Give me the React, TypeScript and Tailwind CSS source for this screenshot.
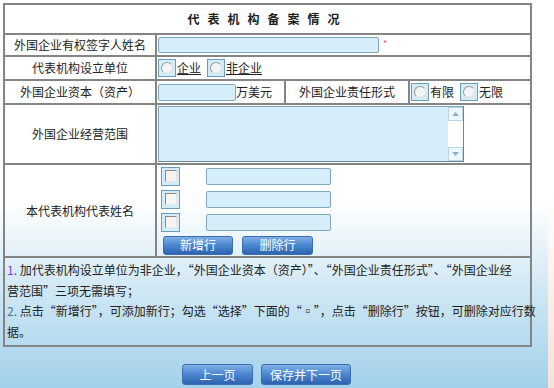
import React from "react";

const font = { fontFamily: '"Noto Sans CJK SC", "Noto Sans", sans-serif' };

function Radio({ label, underline }: { label: string; underline?: boolean }) {
  return (
    <span className="inline-flex items-center">
      <span className="w-[18px] h-[18px] border border-[#6f9bb8] bg-[#d3ecf9] flex items-center justify-center">
        <span className="w-[12px] h-[12px] rounded-full bg-[#f4f4f4] border border-t-[#9a9a9a] border-l-[#9a9a9a] border-r-[#e0e0e0] border-b-[#e0e0e0]" />
      </span>
      <span className={underline ? "ml-[1px] underline underline-offset-1" : "ml-[1px]"}>{label}</span>
    </span>
  );
}

function Check() {
  return (
    <span className="w-[19px] h-[19px] border border-[#6f9bb8] bg-[#d3ecf9] flex items-center justify-center">
      <span className="w-[12px] h-[12px] bg-[#f6f4ee] border border-t-[#8a8a8a] border-l-[#8a8a8a] border-r-[#e6e6e6] border-b-[#e6e6e6]" />
    </span>
  );
}

function BlueButton({ children, w }: { children: React.ReactNode; w: string }) {
  return (
    <button
      className={`${w} h-[19px] rounded-[3px] border border-[#3b6db0] bg-gradient-to-b from-[#7fb0e6] via-[#4a86cf] to-[#2d62b0] text-white text-[12px] leading-none flex items-center justify-center`}
    >
      {children}
    </button>
  );
}

const cell = "border-2 border-[#858585]";

export default function App() {
  return (
    <div className="flex w-[554px] h-[388px] bg-white text-[#222] text-[12px]" style={font}>
      <div className="w-[548px] h-full bg-[linear-gradient(to_bottom,#ffffff_0%,#ffffff_52%,#cfe7f4_75%,#a2d1eb_100%)] pt-[3px] pl-[3px]">
        <table className="border-collapse table-fixed w-[527px]">
          <colgroup>
            <col className="w-[152px]" />
            <col className="w-[129px]" />
            <col className="w-[124px]" />
            <col className="w-[122px]" />
          </colgroup>
          <tbody>
            <tr className="h-[30px]">
              <td colSpan={4} className={`${cell} text-center font-bold tracking-[8px] bg-white`}>
                代表机构备案情况
              </td>
            </tr>
            <tr className="h-[22px]">
              <td className={`${cell} text-center bg-white`}>外国企业有权签字人姓名</td>
              <td colSpan={3} className={`${cell} bg-white pl-[1px]`}>
                <div className="flex items-center">
                  <div className="w-[221px] h-[16px] bg-[#d5eefa] border border-[#7fa7bf] rounded-[2px]" />
                  <span className="ml-[4px] text-[#f04a7a] text-[9px] -mt-[2px]">*</span>
                </div>
              </td>
            </tr>
            <tr className="h-[24px]">
              <td className={`${cell} text-center bg-white`}>代表机构设立单位</td>
              <td colSpan={3} className={`${cell} bg-white pl-[1px]`}>
                <div className="flex items-center gap-[6px]">
                  <Radio label="企业" underline />
                  <Radio label="非企业" underline />
                </div>
              </td>
            </tr>
            <tr className="h-[24px]">
              <td className={`${cell} text-center bg-white`}>外国企业资本（资产）</td>
              <td className={`${cell} bg-white pl-[1px]`}>
                <div className="flex items-center">
                  <div className="w-[78px] h-[17px] bg-[#d5eefa] border border-[#7fa7bf] rounded-[2px]" />
                  <span>万美元</span>
                </div>
              </td>
              <td className={`${cell} text-center bg-white`}>外国企业责任形式</td>
              <td className={`${cell} bg-white pl-[1px]`}>
                <div className="flex items-center gap-[6px]">
                  <Radio label="有限" />
                  <Radio label="无限" />
                </div>
              </td>
            </tr>
            <tr className="h-[60px]">
              <td className={`${cell} text-center bg-white`}>外国企业经营范围</td>
              <td colSpan={3} className={`${cell} bg-white pl-[1px]`}>
                <div className="w-[306px] h-[56px] flex bg-[#d5eefa] border border-[#7f9fb4] border-r-[#6b8597] border-b-[#6b8597]">
                  <div className="flex-1" />
                  <div className="w-[15px] bg-white flex flex-col justify-between">
                    <div className="h-[14px] border border-[#b9d6e8] bg-[#eef7fc] flex items-center justify-center">
                      <svg width="7" height="4" viewBox="0 0 7 4"><path d="M0 4 L3.5 0 L7 4 Z" fill="#8fb0c8" /></svg>
                    </div>
                    <div className="h-[14px] border border-[#b9d6e8] bg-[#eef7fc] flex items-center justify-center">
                      <svg width="7" height="4" viewBox="0 0 7 4"><path d="M0 0 L3.5 4 L7 0 Z" fill="#8fb0c8" /></svg>
                    </div>
                  </div>
                </div>
              </td>
            </tr>
            <tr className="h-[93px]">
              <td className={`${cell} text-center`}>本代表机构代表姓名</td>
              <td colSpan={3} className={`${cell} pl-[4px]`}>
                <div className="flex flex-col gap-[4px]">
                  {[0, 1, 2].map((i) => (
                    <div key={i} className="flex items-center gap-[26px]">
                      <Check />
                      <div className="w-[125px] h-[17px] bg-[#d5eefa] border border-[#7fa7bf] rounded-[2px]" />
                    </div>
                  ))}
                  <div className="flex gap-[9px] pl-[2px]">
                    <BlueButton w="w-[70px]">新增行</BlueButton>
                    <BlueButton w="w-[71px]">删除行</BlueButton>
                  </div>
                </div>
              </td>
            </tr>
            <tr className="h-[86px]">
              <td colSpan={4} className={`${cell} pl-[2px] pr-0 pt-[2px] pb-[3px] align-top leading-[20.5px] whitespace-nowrap`}>
                <p>
                  <span className="text-[#7a3fd0]">1. </span>加代表机构设立单位为非企业，“外国企业资本（资产）”、“外国企业责任形式”、“外国企业经<br />
                  营范围”三项无需填写；
                </p>
                <p>
                  <span className="text-[#4e6f9a]">2. </span>点击“新增行”，可添加新行；勾选“选择”下面的“▫”，点击“删除行”按钮，可删除对应行数<br />
                  据。
                </p>
              </td>
            </tr>
          </tbody>
        </table>
        <div className="w-[527px] flex justify-center gap-[8px] mt-[17px]">
          <BlueButton w="w-[71px] h-[21px]">上一页</BlueButton>
          <BlueButton w="w-[90px] h-[21px]">保存并下一页</BlueButton>
        </div>
      </div>
      <div className="flex-1 h-full bg-gradient-to-b from-white via-white to-[#f3e4d6]" />
    </div>
  );
}
